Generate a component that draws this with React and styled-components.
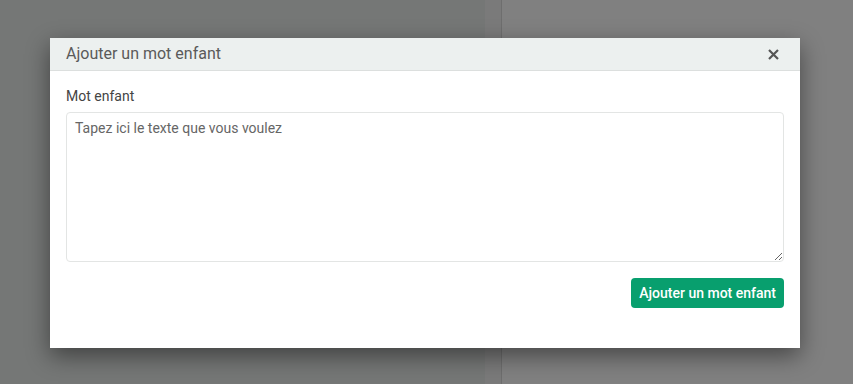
import React from "react";
import styled, { createGlobalStyle } from "styled-components";

const Global = createGlobalStyle`
  html, body { margin: 0; padding: 0; }
  body { font-family: Roboto, "Liberation Sans", sans-serif; }
  * { box-sizing: border-box; }
`;

const Page = styled.div`
  position: relative;
  width: 853px;
  height: 384px;
  display: flex;
  overflow: hidden;
`;

const Pane = styled.div`
  width: ${(p) => (p.$w ? `${p.$w}px` : "auto")};
  flex: ${(p) => (p.$w ? "none" : "1")};
  background: ${(p) => p.$bg};
`;

const Modal = styled.div`
  position: absolute;
  left: 50px;
  top: 38px;
  width: 750px;
  height: 310px;
  background: #fff;
  box-shadow: 0 8px 22px rgba(0, 0, 0, 0.45);
  display: flex;
  flex-direction: column;
`;

const Header = styled.div`
  height: 33px;
  background: #ecf0ef;
  border-bottom: 1px solid #dcdfde;
  display: flex;
  align-items: center;
  justify-content: space-between;
  padding: 0 20px 0 16px;
`;

const Title = styled.div`
  font-size: 16px;
  color: #5a5a5a;
  line-height: 20px;
`;

const Close = styled.button`
  border: none;
  background: none;
  padding: 0;
  width: 14px;
  height: 14px;
  display: flex;
  align-items: center;
  justify-content: center;
  cursor: pointer;
`;

const Body = styled.div`
  padding: 15px 16px 0 16px;
  display: flex;
  flex-direction: column;
`;

const Label = styled.label`
  font-size: 14px;
  line-height: 20px;
  color: #444;
  margin-bottom: 6px;
`;

const Area = styled.textarea`
  height: 150px;
  border: 1px solid #e3e5e4;
  border-radius: 4px;
  padding: 5px 8px;
  font-family: Roboto, "Liberation Sans", sans-serif;
  font-size: 14px;
  line-height: 20px;
  color: #333;
  resize: vertical;
  outline: none;
  &::placeholder { color: #666; opacity: 1; }
`;

const Footer = styled.div`
  display: flex;
  justify-content: flex-end;
  margin-top: 16px;
`;

const Button = styled.button`
  height: 30px;
  padding: 0 8px;
  background: #089f6e;
  color: #fff;
  border: none;
  border-radius: 4px;
  font-family: Roboto, "Liberation Sans", sans-serif;
  font-size: 14px;
  font-weight: 500;
  cursor: pointer;
`;

export default function App() {
  return (
    <>
      <Global />
      <Page>
        <Pane $w={485} $bg="#757776" />
        <Pane $w={16} $bg="#7a7a7a" />
        <Pane $w={1} $bg="#6e6e6e" />
        <Pane $bg="#808080" />
        <Modal>
          <Header>
            <Title>Ajouter un mot enfant</Title>
            <Close aria-label="Fermer">
              <svg width="11" height="11" viewBox="0 0 11 11">
                <path d="M1 1L10 10M10 1L1 10" stroke="#555" strokeWidth="2.2" />
              </svg>
            </Close>
          </Header>
          <Body>
            <Label>Mot enfant</Label>
            <Area placeholder="Tapez ici le texte que vous voulez" />
            <Footer>
              <Button>Ajouter un mot enfant</Button>
            </Footer>
          </Body>
        </Modal>
      </Page>
    </>
  );
}
